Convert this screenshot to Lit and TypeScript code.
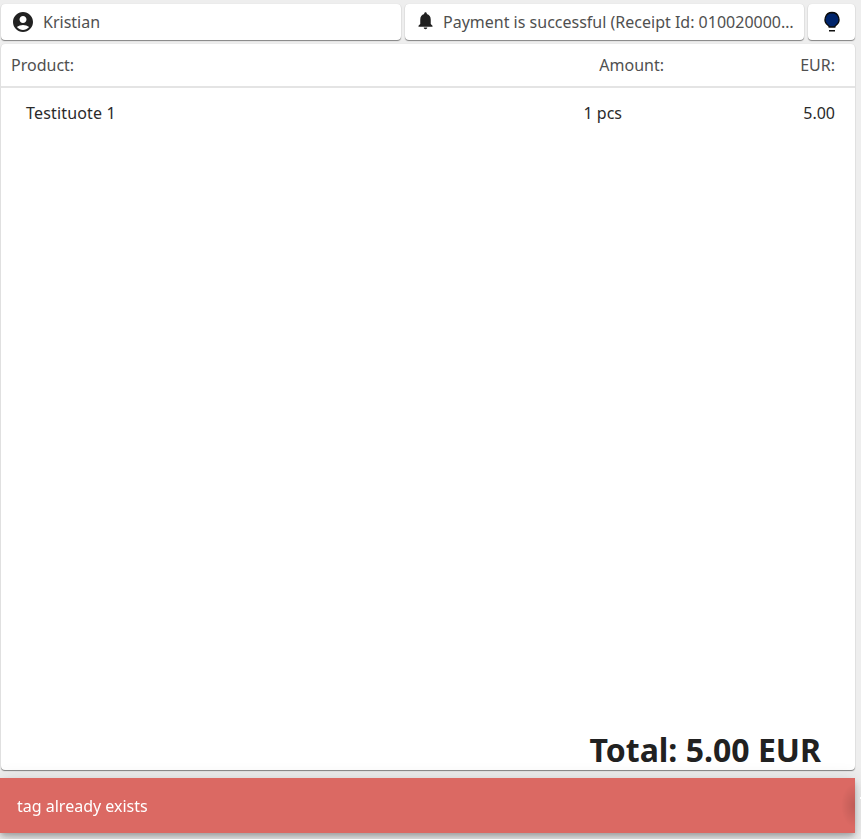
import { LitElement, html, css } from "lit";
import { customElement } from "lit/decorators.js";

@customElement("app-root")
export class AppRoot extends LitElement {
  static styles = css`
    :host {
      display: block;
      height: 839px;
      background: #eeeeee;
      font-family: "Noto Sans", "Open Sans", sans-serif;
      color: #212121;
      overflow: hidden;
    }
    .page {
      display: flex;
      flex-direction: column;
      gap: 4px;
      padding: 4px 6px 0 1px;
      height: 839px;
      box-sizing: border-box;
    }
    .card {
      background: #fff;
      border-radius: 4px;
      box-shadow: 0 1px 1px rgba(0, 0, 0, 0.45), 0 0 1px rgba(0, 0, 0, 0.12);
    }
    .top {
      display: flex;
      gap: 4px;
      height: 36px;
    }
    .chip {
      display: flex;
      align-items: center;
      box-sizing: border-box;
      color: #505050;
      font-size: 16px;
      white-space: nowrap;
      overflow: hidden;
    }
    .user { width: 400px; padding-left: 10px; gap: 8px; }
    .note { width: 399px; padding: 0 10px; gap: 7px; }
    .note svg { margin-top: -3px; }
    .note span { overflow: hidden; text-overflow: ellipsis; }
    .bulb { width: 47px; justify-content: center; }
    .main {
      height: 726px;
      display: flex;
      flex-direction: column;
    }
    .row {
      display: grid;
      align-items: center;
    }
    .head {
      grid-template-columns: 1fr auto 171px;
      height: 44px;
      box-sizing: border-box;
      border-bottom: 2px solid #e4e4e4;
      padding: 0 20px 0 10px;
      font-size: 16px;
      color: #505050;
    }
    .line {
      grid-template-columns: 1fr auto 213px;
      padding: 14px 20px 0 25px;
      font-size: 16px;
      color: #2a2a2a;
    }
    .name { letter-spacing: 0.17px; }
    .eur { text-align: right; }
    .total {
      margin-top: auto;
      text-align: right;
      padding-right: 34px;
      font-size: 32px;
      line-height: 40px;
      font-weight: 700;
      color: #212121;
    }
    .snack {
      position: fixed;
      left: 0;
      top: 778px;
      width: 855px;
      height: 55px;
      box-sizing: border-box;
      padding-left: 17px;
      display: flex;
      align-items: center;
      background: #db6963;
      color: #fff;
      font-size: 16px;
      box-shadow: 0 3px 5px -1px rgba(0, 0, 0, 0.2), 0 6px 10px rgba(0, 0, 0, 0.14), 0 1px 18px rgba(0, 0, 0, 0.12);
    }
    .snack::after {
      content: "";
      position: absolute;
      right: 0;
      top: 4px;
      bottom: 4px;
      width: 14px;
      background: radial-gradient(ellipse 14px 22px at 100% 50%, rgba(0, 0, 0, 0.13), rgba(0, 0, 0, 0));
    }
    .snack::before {
      content: "";
      position: absolute;
      left: 860px;
      top: 19px;
      width: 1px;
      height: 2px;
      background: #fff;
    }
    svg { display: block; flex: none; }
  `;

  render() {
    return html`
      <div class="page">
        <div class="top">
          <div class="card chip user">
            <svg width="24" height="24" viewBox="0 0 24 24" fill="#212121"><path d="M12 2C6.48 2 2 6.48 2 12s4.48 10 10 10 10-4.48 10-10S17.52 2 12 2zm0 4c1.93 0 3.5 1.57 3.5 3.5S13.93 13 12 13s-3.5-1.57-3.5-3.5S10.07 6 12 6zm0 14c-2.03 0-4.43-.82-6.14-2.88C7.55 15.8 9.68 15 12 15s4.45.8 6.14 2.12C16.43 19.18 14.03 20 12 20z"/></svg>
            <span>Kristian</span>
          </div>
          <div class="card chip note">
            <svg width="21" height="21" viewBox="0 0 24 24" fill="#212121"><path d="M12 22c1.1 0 2-.9 2-2h-4c0 1.1.89 2 2 2zm6-6v-5c0-3.07-1.64-5.64-4.5-6.32V4c0-.83-.67-1.5-1.5-1.5s-1.5.67-1.5 1.5v.68C7.63 5.36 6 7.92 6 11v5l-2 2v1h16v-1l-2-2z"/></svg>
            <span>Payment is successful (Receipt Id: 0100200000000000)</span>
          </div>
          <div class="card chip bulb">
            <svg width="24" height="24" viewBox="0 0 24 24"><path fill="#111" d="M9 20h6v1.6H9z"/><path fill="#00246b" stroke="#0a0a0a" stroke-width="1.3" d="M12 2.5a7 7 0 0 0-4 12.7c.7.5 1.2 1.1 1.2 1.8h5.6c0-.7.5-1.3 1.2-1.8A7 7 0 0 0 12 2.5z"/></svg>
          </div>
        </div>
        <div class="card main">
          <div class="row head">
            <span>Product:</span><span>Amount:</span><span class="eur">EUR:</span>
          </div>
          <div class="row line">
            <span class="name">Testituote 1</span><span>1 pcs</span><span class="eur">5.00</span>
          </div>
          <div class="total">Total: 5.00 EUR</div>
        </div>
      </div>
      <div class="snack">tag already exists</div>
    `;
  }
}
